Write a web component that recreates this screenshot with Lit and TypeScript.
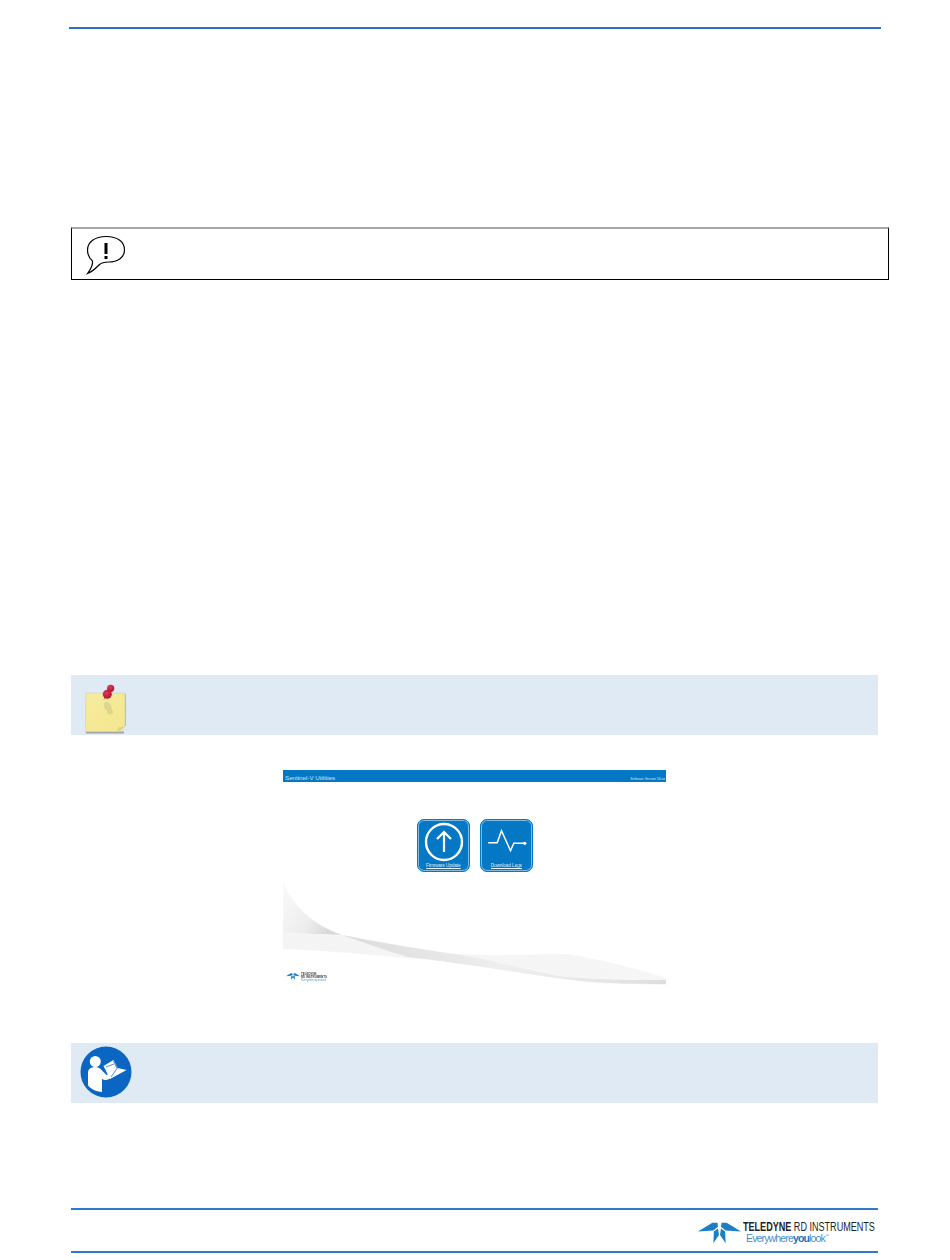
import { LitElement, html, css } from "lit";
import { customElement } from "lit/decorators.js";

@customElement("app-root")
export class AppRoot extends LitElement {
  static styles = css`
    :host { display: block; width: 950px; height: 1260px; background: #fff; font-family: "Liberation Sans", Arial, sans-serif; overflow: hidden; }
    .page { display: flex; flex-direction: column; padding: 27px 72px 0 71px; }
    .toprule { height: 2px; background: #2e6fc4; margin: 0 -3px 0 -2px; }
    .warn { box-sizing: border-box; margin: 198px -11px 0 0; height: 53px; border: 1px solid #000; border-top: 2px solid #a6a6a6; display: flex; align-items: flex-start; padding: 6px 0 0 14px; }
    .warn svg { width: 40px; height: 40px; display: block; }
    .band { height: 60px; background: #dfeaf4; display: flex; }
    .note { margin-top: 395px; padding: 9px 0 0 14px; box-sizing: border-box; }
    .note svg { width: 44px; height: 52px; display: block; }
    .book { margin-top: 58px; padding: 3px 0 0 9px; box-sizing: border-box; }
    .book svg { width: 52px; height: 52px; display: block; }
    .shot { position: relative; width: 383px; height: 215px; margin: 35px 0 0 212px; display: flex; flex-direction: column; filter: blur(0.4px); }
    .bar { height: 12px; background: #0478c4; color: #cfe6f5; display: flex; justify-content: space-between; align-items: flex-end; padding: 0 1px 0 2px; }
    .bar b { font-weight: 400; font-size: 6.2px; line-height: 9px; }
    .bar i { font-style: normal; font-size: 3.4px; line-height: 5px; }
    .btns { display: flex; justify-content: center; gap: 10px; margin: 37px 0 0 0; padding-left: 1px; }
    .btn { box-sizing: border-box; width: 53px; height: 53px; background: #0478c4; border: 1px solid #0478c4; border-radius: 7px; box-shadow: inset 0 0 0 1px #7fbde6; display: flex; flex-direction: column; align-items: center; }
    .btn svg { display: block; width: 44px; height: 40px; margin-top: 2px; }
    .btn span { font-size: 4.5px; line-height: 6px; color: #e6f2fa; text-decoration: underline; text-decoration-thickness: 0.4px; margin-top: 1px; white-space: nowrap; }
    .swoosh { position: absolute; left: 0; top: 0; width: 383px; height: 215px; display: block; }
    .minilogo { position: absolute; left: 3px; top: 203px; display: flex; align-items: flex-start; gap: 1px; }
    .minilogo svg { width: 14px; height: 7px; display: block; }
    .minilogo div { display: flex; flex-direction: column; font-size: 2.9px; line-height: 3.2px; color: #444; font-weight: 700; }
    .minilogo small { font-size: 2.9px; color: #5a9ccf; font-weight: 400; }
    .footer { margin-top: 105px; border-top: 2px solid #2e7bcd; border-bottom: 2px solid #2e7bcd; display: flex; justify-content: flex-end; align-items: flex-start; padding-top: 11px; height: 30px; gap: 2px; }
    .footer svg { width: 43px; height: 23px; display: block; }
    .brand { display: flex; flex-direction: column; width: 135px; }
    .l1 { font-size: 12px; line-height: 12px; color: #222; white-space: nowrap; transform: scaleX(0.755); transform-origin: left center; }
    .l1 b { font-weight: 700; }
    .l2 { font-size: 10.5px; line-height: 11px; color: #3f8fcb; white-space: nowrap; letter-spacing: -0.85px; margin-left: 3px; }
    .l2 b { font-weight: 700; color: #1f6fb8; }
    .l2 sup { font-size: 4px; line-height: 0; vertical-align: 5px; }
  `;

  mark() {
    return html`<svg viewBox="0 0 42 21" fill="#1b7fc6">
      <path d="M0 9.500 L14 1 L19 1 L19.500 5 L15 8.500 Z" />
      <path d="M42 9.500 L28 1 L23 1 L22.500 5 L27 8.500 Z" />
      <path d="M15.500 9.500 L19.500 6.500 L20.500 13 L15 21 Z" />
      <path d="M26.500 9.500 L22.500 6.500 L21.500 13 L27 21 Z" />
    </svg>`;
  }

  render() {
    return html`
      <div class="page">
        <div class="toprule"></div>

        <div class="warn">
          <svg viewBox="0 0 40 40" fill="none">
            <path d="M20 1.500 C32 1.500 38.500 7 38.500 15 C38.500 23 31 27 23 27 C18 27 15 28 13 30 C10 33 6 37 1.500 38.500 C5 34 7 30 6.500 26 C3 23 1.500 19 1.500 15 C1.500 7 9 1.500 20 1.500 Z" stroke="#000" stroke-width="1.200" fill="#fff" />
            <rect x="18.500" y="8" width="3" height="11" fill="#000" />
            <rect x="18.500" y="21" width="3" height="3" fill="#000" />
          </svg>
        </div>

        <div class="band note">
          <svg viewBox="0 0 44 52">
            <defs>
              <linearGradient id="pap" x1="0" y1="0" x2="1" y2="1"><stop offset="0" stop-color="#f6ec9f" /><stop offset="1" stop-color="#f4e68e" /></linearGradient>
              <radialGradient id="pin" cx="0.4" cy="0.35" r="0.7"><stop offset="0" stop-color="#dd3a55" /><stop offset="1" stop-color="#b3132f" /></radialGradient>
            </defs>
            <rect x="1" y="47.500" width="38" height="2" fill="#a3a7aa" />
            <rect x="40" y="10" width="1" height="32" fill="#b9b9a8" />
            <path d="M1 9 L40 9 L40 42 C38 46 35 47.500 31 47.500 L0 47.500 Z" fill="url(#pap)" stroke="#c9c9b4" stroke-width="0.500" />
            <path d="M31 47.500 C35 47 37 45 40 42 C38 43 35 43 33.500 43 C33.500 45 32.500 47 31 47.500 Z" fill="#e2d27c" />
            <ellipse cx="22.700" cy="22.500" rx="3.500" ry="5" fill="#ddd48f" transform="rotate(-30 22.700 22.500)" />
            <ellipse cx="25" cy="27.700" rx="3" ry="2.600" fill="#ddd48f" />
            <path d="M21 12 L19 15.500" stroke="#8a7a60" stroke-width="0.800" />
            <path d="M23 9 L25.500 5" stroke="#c01c3a" stroke-width="4" />
            <circle cx="22.300" cy="10.300" r="4.500" fill="url(#pin)" />
            <circle cx="25.700" cy="4.300" r="3.600" fill="url(#pin)" />
          </svg>
        </div>

        <div class="shot">
          <svg class="swoosh" viewBox="0 0 383 215">
            <defs>
              <linearGradient id="g1" x1="0" y1="0" x2="1" y2="0.6"><stop offset="0" stop-color="#fbfbfb" /><stop offset="0.65" stop-color="#ededed" /><stop offset="1" stop-color="#d8d8d8" /></linearGradient>
              <linearGradient id="g2" x1="0" y1="0" x2="1" y2="0"><stop offset="0" stop-color="#f4f4f4" /><stop offset="1" stop-color="#f6f6f6" /></linearGradient>
              <linearGradient id="g3" x1="0" y1="0" x2="1" y2="0"><stop offset="0" stop-color="#dcdcdc" /><stop offset="0.5" stop-color="#eeeeee" /><stop offset="0.8" stop-color="#e6e6e6" /><stop offset="1" stop-color="#dddddd" /></linearGradient>
            </defs>
            <path d="M0 110 C8 135 30 155 59 165 L0 163 Z" fill="url(#g1)" />
            <path d="M0 163 L59 165 C80 170 105 175 125 178 L175 184 C210 186 250 184 285 184 C320 190 360 200 383 208 L383 215 L308 213 C270 207 230 200 192 195 C160 190 135 189 112 187 C70 183 30 180 0 179 Z" fill="url(#g2)" />
            <path d="M59 165 C80 172 100 180 125 187 C170 192 230 202 280 209 C310 213 345 214 383 214 L383 210 C340 210 310 210 275 206 C235 198 200 188 170 184 C130 178 90 171 59 165 Z" fill="url(#g3)" />
          </svg>
          <div class="bar"><b>Sentinel-V Utilities</b><i>Software Version 56.xx</i></div>
          <div class="btns">
            <div class="btn">
              <svg viewBox="0 0 44 40" fill="none" stroke="#fff">
                <circle cx="22" cy="20" r="18" stroke-width="2.400" />
                <path d="M22 30 L22 10 M15 17 L22 10 L29 17" stroke-width="2.200" />
              </svg>
              <span>Firmware Update</span>
            </div>
            <div class="btn">
              <svg viewBox="0 0 44 40" fill="none" stroke="#fff">
                <path d="M3.200 20.700 L12.200 20.700 L16.500 8.700 L25.500 28.700 L28.800 21.300 L39.800 21.300" stroke-width="1.500" />
                <circle cx="39.800" cy="21.300" r="1.600" fill="#fff" stroke="none" />
              </svg>
              <span>Download Logs</span>
            </div>
          </div>
          <div class="minilogo">
            <svg viewBox="0 0 42 21" fill="#1b7fc6">
              <path d="M0 9.500 L14 1 L19 1 L19.500 5 L15 8.500 Z" />
              <path d="M42 9.500 L28 1 L23 1 L22.500 5 L27 8.500 Z" />
              <path d="M15.500 9.500 L19.500 6.500 L20.500 13 L15 21 Z" />
              <path d="M26.500 9.500 L22.500 6.500 L21.500 13 L27 21 Z" />
            </svg>
            <div><span>TELEDYNE</span><span>RD INSTRUMENTS</span><small>Everywhereyoulook</small></div>
          </div>
        </div>

        <div class="band book">
          <svg viewBox="0 0 52 52">
            <circle cx="26" cy="26" r="25.500" fill="#0a66c2" />
            <circle cx="15.300" cy="15.500" r="5.500" fill="#fff" />
            <path d="M8 27 C8 23 11 21 15 21 C18 21 20 22 21.500 24 L26.500 29 L31 27 L33 30 C30 33 27 34.500 24.500 34 L22 33 L22 46 C16 45.500 11 43 8 39.500 Z" fill="#fff" />
            <path d="M23.500 20 L33.500 14 L37.500 22 L46.500 24 L30 33 Z" fill="#fff" />
            <path d="M33.500 15 L37 22.500 L31 31 M26 21 L34 18" stroke="#0a66c2" stroke-width="0.700" fill="none" />
          </svg>
        </div>

        <div class="footer">
          ${this.mark()}
          <div class="brand">
            <div class="l1"><b>TELEDYNE</b> RD INSTRUMENTS</div>
            <div class="l2">Everywhere<b>you</b>look<sup>™</sup></div>
          </div>
        </div>
      </div>
    `;
  }
}
